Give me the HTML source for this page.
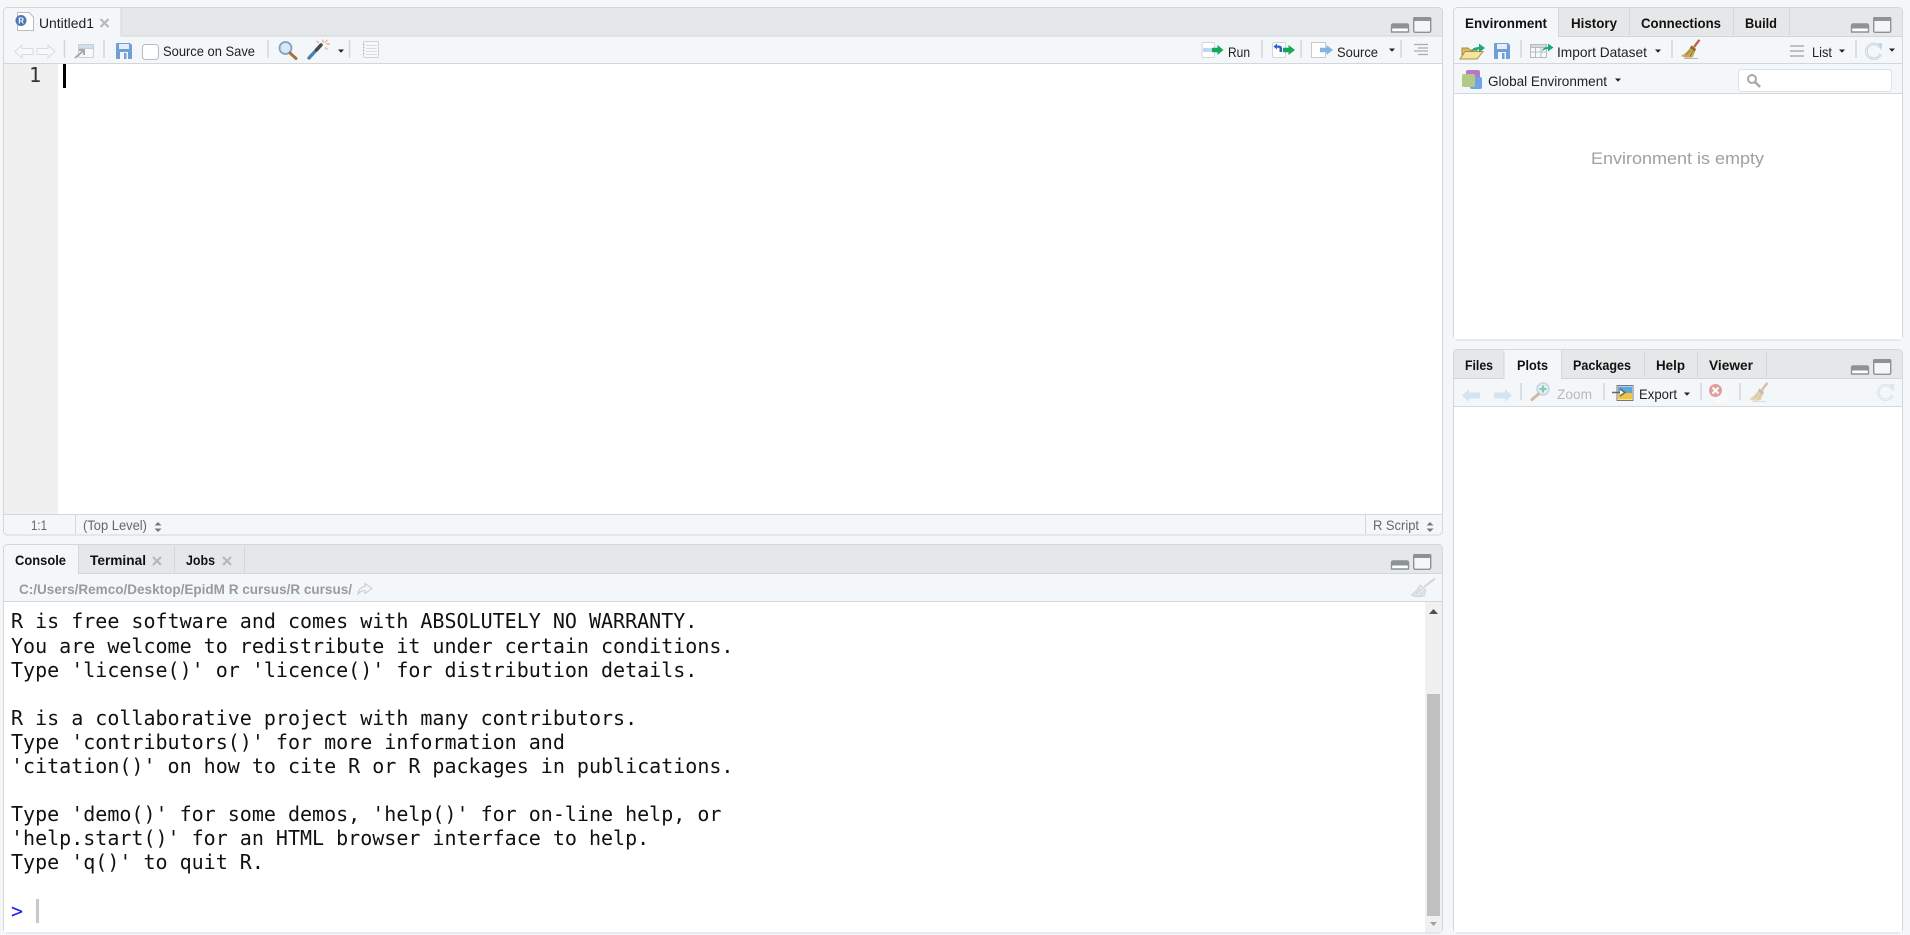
<!DOCTYPE html>
<html><head><meta charset="utf-8"><title>RStudio</title>
<style>
html,body{margin:0;padding:0;background:#f4f6f8;width:1910px;height:935px;overflow:hidden}
svg{display:block}
text{font-family:"Liberation Sans",sans-serif;font-size:14px;fill:#222;white-space:pre}
.b{font-weight:bold;fill:#111}
.m{font-family:"DejaVu Sans Mono",monospace;font-size:20px;fill:#111}
.st{fill:#666;font-size:14px}
.sep{stroke:#d3d7d9;stroke-width:1.5}
</style></head><body>
<svg width="1910" height="935" viewBox="0 0 1910 935" xmlns="http://www.w3.org/2000/svg">
<defs>
<g id="win">
 <path d="M0.5 9 q0-2 2-2 h13 q2 0 2 2 v6 h-17z" fill="#fff" stroke="#8b9396" stroke-width="1.4"/>
 <path d="M0 9 q0-2.500 2.500-2.500 h13 q2.500 0 2.500 2.500 v2.500 h-18z" fill="#8b9396"/>
 <rect x="22.700" y="0.700" width="17" height="14.600" rx="1.500" fill="#f4f6f8" stroke="#8b9396" stroke-width="1.400"/>
 <rect x="22" y="0" width="18.400" height="4" rx="1.500" fill="#8b9396"/>
</g>
<g id="floppy">
 <path d="M0 1 q0-1 1-1 h13 l2 2 v13 q0 1-1 1 h-14 q-1 0-1-1z" fill="#6f9fd4"/>
 <rect x="3" y="1" width="10" height="5" fill="#e6eef7"/>
 <rect x="4" y="9" width="8" height="7" fill="#f4f7fa"/>
 <rect x="8" y="10" width="2.500" height="6" fill="#6f9fd4"/>
</g>
<g id="broom">
 <path d="M13 8 L18.500 0.800" stroke="#c0654a" stroke-width="2.400" fill="none"/>
 <path d="M10.500 6.500 L15 10 L12 18 Q6 20 0 17 Q6 14 10.500 6.500z" fill="#caa659"/>
 <path d="M10.500 6.500 L15 10 L13.800 12.500 L9 9z" fill="#8b6b2e"/>
 <path d="M5 16 L9.500 11 M9 17.500 L12 12" stroke="#8f7434" stroke-width="0.800" fill="none"/>
 <path d="M3 19.500 h14" stroke="#b9b9b9" stroke-width="1"/>
</g>
<g id="arrowL"><path d="M0 6.500 L7 0 V3.500 H18 V9.500 H7 V13z"/></g>
<g id="arrowR"><path d="M18 6.500 L11 0 V3.500 H0 V9.500 H11 V13z"/></g>
<g id="refresh">
 <path d="M14.500 4 A7.300 7.300 0 1 0 15.500 11" fill="none" stroke="#c5d2e2" stroke-width="2.600"/>
 <path d="M11 1 L17 0 L16.500 7 z" fill="#c5d2e2"/>
 <path d="M14.500 4 A7.300 7.300 0 1 0 15.500 11" fill="none" stroke="#e9eff6" stroke-width="0.900"/>
</g>
<g id="ud"><path d="M-3.500 -1.500 L0 -5 L3.500 -1.500z M-3.500 1.500 L0 5 L3.500 1.500z" fill="#777"/></g>
<path id="caret" d="M-3 -1.500 H3 L0 1.800z" fill="#222"/>
<path id="xx" d="M-4 -4 L4 4 M4 -4 L-4 4" stroke="#b5b9bb" stroke-width="2.200" fill="none"/>
</defs>

<!-- ===== Editor pane ===== -->
<rect x="3.500" y="7.500" width="1439" height="527.500" rx="4" fill="#f4f7f9" stroke="#d3d7da"/>
<path d="M121 8 H1438 Q1442 8 1442 12 V36 H121z" fill="#e6e7e8"/>
<path d="M121 8 V36 H1442" fill="none" stroke="#d3d7da"/>
<path d="M4 12 Q4 8 8 8 H120 V36 H4z" fill="#f4f7f9"/>
<rect x="4" y="63.500" width="1438" height="451" fill="#fff"/>
<rect x="4" y="64" width="54" height="450" fill="#f0f0f0"/>
<path d="M4 63.500 H1442 M4 514.500 H1442" stroke="#d3d7da"/>
<!-- tab icon -->
<path d="M17.500 12.500 H29 L33.500 17 V30.500 H17.500z" fill="#fff" stroke="#b9bdc0"/>
<circle cx="21" cy="20.500" r="5.500" fill="#4a78b5"/>
<text x="18.300" y="23.500" style="font-size:8px;font-weight:bold;fill:#fff">R</text>
<text x="39" y="28" textLength="55" lengthAdjust="spacingAndGlyphs">Untitled1</text>
<use href="#xx" x="104.500" y="23"/>
<use href="#win" x="1391" y="17"/>
<!-- toolbar -->
<use href="#arrowL" x="15" y="45" fill="#f6f8f9" stroke="#d9dcde"/>
<use href="#arrowR" x="37" y="45" fill="#f6f8f9" stroke="#d9dcde"/>
<path class="sep" d="M64.500 40 V58 M104 40 V58 M268 40 V58 M349.500 40 V58 M1262 40 V58 M1301 40 V58 M1401 40 V58"/>
<g>
 <rect x="78.500" y="44.500" width="15" height="13" rx="1.500" fill="#f7f9fb" stroke="#c9ced2"/>
 <rect x="78.500" y="44.500" width="15" height="4" fill="#cfe0f1" stroke="#c9ced2"/>
 <path d="M75 58 L83 51 M79 50 H84 V55" stroke="#a3abb1" stroke-width="2" fill="none"/>
</g>
<use href="#floppy" x="116" y="43"/>
<rect x="142.500" y="44.500" width="16" height="15" rx="3" fill="#fff" stroke="#b7babc"/>
<text x="163" y="56" textLength="92" lengthAdjust="spacingAndGlyphs">Source on Save</text>
<g>
 <circle cx="285.500" cy="48" r="6" fill="#d8e8f7" stroke="#7fa3c5" stroke-width="1.800"/>
 <path d="M290 53 L296 58.500" stroke="#a8703e" stroke-width="3" stroke-linecap="round"/>
</g>
<g>
 <path d="M309 58 L321 45" stroke="#4a82ad" stroke-width="3.400" stroke-linecap="round"/>
 <path d="M316.500 50 L321 45" stroke="#4a4a4a" stroke-width="3.400" stroke-linecap="round"/>
 <path d="M323 39.500 V43 M330 44 H326 M327.500 40 L325 42.500 M327.500 49.500 L325 47.500 M316.500 41 L319 43" stroke="#f4b49a" stroke-width="1.500"/>
</g>
<use href="#caret" x="341" y="51"/>
<g>
 <rect x="363.500" y="41.500" width="15" height="16" rx="1.500" fill="#f8f9fa" stroke="#d0d3d6"/>
 <path d="M366 45.500 H377 M366 48.500 H377 M366 51.500 H377 M366 54.500 H377" stroke="#d5dde5"/>
 <path d="M364 44 V56" stroke="#aab0b5" stroke-dasharray="1 2"/>
</g>
<!-- run -->
<rect x="1202" y="42.500" width="12.500" height="15" rx="1.500" fill="#fff" stroke="#d2d6d9"/>
<rect x="1203" y="48" width="9" height="4" fill="#bcd7ee"/>
<path d="M1212 47.800 H1217.500 V45 L1223.500 50 L1217.500 55 V52.200 H1212z" fill="#14a85c"/>
<text x="1228" y="57" textLength="22" lengthAdjust="spacingAndGlyphs">Run</text>
<rect x="1272.500" y="42.500" width="13" height="15" rx="1.500" fill="#fff" stroke="#d2d6d9"/>
<path d="M1273.500 46.500 L1277 43.500 V45.500 H1279 Q1282 45.500 1282 48.500 V52 H1279.500 V49 Q1279.500 47.800 1278 47.800 H1277 V49.500z" fill="#2d63c8"/>
<path d="M1283 47.800 H1288.500 V45 L1295 50 L1288.500 55 V52.200 H1283z" fill="#14a85c"/>
<rect x="1311.500" y="42.500" width="14" height="15" fill="#fff" stroke="#c6cacd"/>
<path d="M1320 47.800 H1326.500 V45 L1333 50 L1326.500 55 V52.200 H1320z" fill="#84b5e2"/>
<text x="1337" y="57" textLength="41" lengthAdjust="spacingAndGlyphs">Source</text>
<use href="#caret" x="1392" y="50"/>
<path d="M1414 44.500 H1428 M1418 48 H1428 M1414 51 H1428 M1418 54.500 H1428" stroke="#a7abae" stroke-width="1.300"/>
<!-- editor content -->
<text class="m" x="29" y="82" style="fill:#333">1</text>
<rect x="63" y="64" width="3" height="24" fill="#000"/>
<!-- status -->
<text class="st" x="31" y="530" textLength="16" lengthAdjust="spacingAndGlyphs">1:1</text>
<path d="M75.500 515 V534 M1365.500 515 V534" stroke="#d3d7da"/>
<text class="st" x="83" y="530" textLength="64" lengthAdjust="spacingAndGlyphs">(Top Level)</text>
<use href="#ud" x="158" y="527"/>
<text class="st" x="1373" y="530" textLength="46" lengthAdjust="spacingAndGlyphs">R Script</text>
<use href="#ud" x="1430" y="527"/>

<!-- ===== Console pane ===== -->
<rect x="3.500" y="544.500" width="1439" height="388.500" rx="4" fill="#f4f7f9" stroke="#d3d7da"/>
<path d="M78 545 H1438 Q1442 545 1442 549 V573 H78z" fill="#e6e7e8"/>
<path d="M78.500 545 V573.500 H1442 M174.500 546 V572 M244.500 546 V572" fill="none" stroke="#d3d7da"/>
<rect x="4" y="601.500" width="1438" height="331" fill="#fff"/>
<path d="M4 601.500 H1442" stroke="#d3d7da"/>
<text class="b" x="15" y="565" textLength="51" lengthAdjust="spacingAndGlyphs" style="font-size:13.500px">Console</text>
<text class="b" x="90" y="565" textLength="56" lengthAdjust="spacingAndGlyphs" style="font-size:13.500px">Terminal</text>
<use href="#xx" x="157" y="561"/>
<text class="b" x="186" y="565" textLength="29" lengthAdjust="spacingAndGlyphs" style="font-size:13.500px">Jobs</text>
<use href="#xx" x="227" y="561"/>
<use href="#win" x="1391" y="554"/>
<text x="19" y="594" textLength="333" lengthAdjust="spacingAndGlyphs" style="font-weight:bold;fill:#9a9a9a;font-size:13.500px">C:/Users/Remco/Desktop/EpidM R cursus/R cursus/</text>
<path d="M358 594 Q359 587 365 586.500 V583.500 L372 588.500 L365 593.500 V590.500 Q361 590.500 358 594z" fill="#f4f7f9" stroke="#c6cacd"/>
<g fill="none" stroke="#cfd3d6">
 <path d="M1424 587 L1435 578.500" stroke-width="1.800"/>
 <path d="M1420 585 L1426 590 L1424 596 Q1417 597.500 1411.500 595 Q1417 591 1420 585z" fill="#e4e7e9"/>
 <path d="M1416 594 L1421 589 M1420 596 L1423.500 591"/>
</g>
<!-- scrollbar -->
<rect x="1425" y="602" width="17" height="330.500" fill="#f0f0f0"/>
<rect x="1427" y="694" width="13" height="222" fill="#c0c0c0"/>
<path d="M1429 614 L1433.500 609 L1438 614z" fill="#505050"/>
<path d="M1430 922 H1437 L1433.500 926z" fill="#a0a0a0"/>
<!-- console text -->
<g>
<text class="m" x="11" y="628">R is free software and comes with ABSOLUTELY NO WARRANTY.</text>
<text class="m" x="11" y="653">You are welcome to redistribute it under certain conditions.</text>
<text class="m" x="11" y="677">Type 'license()' or 'licence()' for distribution details.</text>
<text class="m" x="11" y="725">R is a collaborative project with many contributors.</text>
<text class="m" x="11" y="749">Type 'contributors()' for more information and</text>
<text class="m" x="11" y="773">'citation()' on how to cite R or R packages in publications.</text>
<text class="m" x="11" y="821">Type 'demo()' for some demos, 'help()' for on-line help, or</text>
<text class="m" x="11" y="845">'help.start()' for an HTML browser interface to help.</text>
<text class="m" x="11" y="869">Type 'q()' to quit R.</text>
<text class="m" x="11" y="918" style="fill:#1a1aff">&gt;</text>
</g>
<rect x="36" y="899" width="3" height="24" fill="#c8c8c8"/>

<!-- ===== Environment pane ===== -->
<rect x="1453.500" y="7.500" width="449" height="332.500" rx="4" fill="#f4f7f9" stroke="#d3d7da"/>
<path d="M1558 8 H1898 Q1902 8 1902 12 V36 H1558z" fill="#e6e7e8"/>
<path d="M1558.500 8 V36.500 H1902 M1629.500 9 V35 M1733.500 9 V35 M1789.500 9 V35" fill="none" stroke="#d3d7da"/>
<rect x="1454" y="93.500" width="448" height="246" fill="#fff"/>
<path d="M1454 63.500 H1902 M1454 93.500 H1902" stroke="#d3d7da"/>
<text class="b" x="1465" y="28" textLength="82" lengthAdjust="spacingAndGlyphs" style="font-size:13.500px">Environment</text>
<text class="b" x="1571" y="28" textLength="46" lengthAdjust="spacingAndGlyphs" style="font-size:13.500px">History</text>
<text class="b" x="1641" y="28" textLength="80" lengthAdjust="spacingAndGlyphs" style="font-size:13.500px">Connections</text>
<text class="b" x="1745" y="28" textLength="32" lengthAdjust="spacingAndGlyphs" style="font-size:13.500px">Build</text>
<use href="#win" x="1851" y="17"/>
<!-- env toolbar -->
<g>
 <path d="M1462 48 H1468 L1470 50 H1477 V58 H1462z" fill="#d8bd6c" stroke="#a98b3b"/>
 <path d="M1460 59 L1465 51.500 H1483 L1477 59z" fill="#f6e3a0" stroke="#ae8f3e"/>
 <path d="M1471 52 Q1472 47 1479 47 V43.500 L1485 48 L1479 52.500 V49.500 Q1474 49.500 1471 52z" fill="#1fa87a"/>
</g>
<use href="#floppy" x="1494" y="43"/>
<path class="sep" d="M1521 40 V58 M1672 40 V58 M1856 40 V58"/>
<g>
 <rect x="1530.500" y="44.500" width="16" height="13" fill="#f6f8fa" stroke="#b4bcc3"/>
 <rect x="1530.500" y="44.500" width="16" height="3" fill="#d5dade" stroke="#b4bcc3"/>
 <path d="M1535.500 47 V57 M1541 47 V57 M1531 52 H1546" stroke="#b4bcc3"/>
 <path d="M1542 51 Q1543 47 1548 47 V43.500 L1553.500 47.500 L1548 51.500 V49 Q1545 49 1542 51z" fill="#1fa87a"/>
</g>
<text x="1557" y="57" textLength="90" lengthAdjust="spacingAndGlyphs">Import Dataset</text>
<use href="#caret" x="1658" y="51"/>
<use href="#broom" x="1681" y="39"/>
<path d="M1790 46 H1804 M1790 51 H1804 M1790 56 H1804" stroke="#a9adb0" stroke-width="1.500"/>
<text x="1812" y="57" textLength="20" lengthAdjust="spacingAndGlyphs">List</text>
<use href="#caret" x="1842" y="51"/>
<use href="#refresh" x="1865" y="43"/>
<use href="#caret" x="1892" y="50"/>
<!-- global env -->
<rect x="1466" y="70" width="14" height="14" rx="2" fill="#b678c9"/>
<rect x="1470" y="77" width="12" height="12" rx="2" fill="#6fa3e3"/>
<rect x="1462" y="74" width="13" height="13" rx="2" fill="#b4c986"/>
<text x="1488" y="86" textLength="119" lengthAdjust="spacingAndGlyphs">Global Environment</text>
<use href="#caret" x="1618" y="80"/>
<rect x="1738.500" y="69.500" width="153" height="22" rx="3" fill="#fff" stroke="#e0e3e5"/>
<circle cx="1752" cy="79" r="4" fill="none" stroke="#a9a9a9" stroke-width="2"/>
<path d="M1755 82 L1760 87" stroke="#a9a9a9" stroke-width="2.600"/>
<text x="1591" y="164" textLength="173" lengthAdjust="spacingAndGlyphs" style="font-size:17px;fill:#a0a0a0">Environment is empty</text>

<!-- ===== Plots pane ===== -->
<rect x="1453.500" y="349.500" width="449" height="583.500" rx="4" fill="#f4f7f9" stroke="#d3d7da"/>
<path d="M1458 350 H1504 V378 H1454 V354 Q1454 350 1458 350z" fill="#e6e7e8"/>
<path d="M1561 350 H1898 Q1902 350 1902 354 V378 H1561z" fill="#e6e7e8"/>
<path d="M1454 378.500 H1504 V351 M1561.500 351 V378.500 H1902 M1644.500 351 V377 M1697.500 351 V377 M1766.500 351 V377" fill="none" stroke="#d3d7da"/>
<rect x="1454" y="406.500" width="448" height="526" fill="#fff"/>
<path d="M1454 406.500 H1902" stroke="#d3d7da"/>
<text class="b" x="1465" y="370" textLength="28" lengthAdjust="spacingAndGlyphs" style="font-size:13.500px">Files</text>
<text class="b" x="1517" y="370" textLength="31" lengthAdjust="spacingAndGlyphs" style="font-size:13.500px">Plots</text>
<text class="b" x="1573" y="370" textLength="58" lengthAdjust="spacingAndGlyphs" style="font-size:13.500px">Packages</text>
<text class="b" x="1656" y="370" textLength="29" lengthAdjust="spacingAndGlyphs" style="font-size:13.500px">Help</text>
<text class="b" x="1709" y="370" textLength="44" lengthAdjust="spacingAndGlyphs" style="font-size:13.500px">Viewer</text>
<use href="#win" x="1851" y="359"/>
<use href="#arrowL" x="1462" y="389" fill="#d3e3f0"/>
<use href="#arrowR" x="1494" y="389" fill="#d3e3f0"/>
<path class="sep" d="M1521 383 V400 M1604 383 V400 M1701 383 V400 M1740 383 V400"/>
<g opacity="0.55">
 <circle cx="1543" cy="389" r="6" fill="#cfe4f3" stroke="#9dbbd0" stroke-width="1.500"/>
 <path d="M1543 385.500 V392.500 M1539.500 389 H1546.500" stroke="#23a86e" stroke-width="2"/>
 <path d="M1538.500 394 L1532 399.500" stroke="#b9825a" stroke-width="3" stroke-linecap="round"/>
</g>
<text x="1557" y="399" textLength="35" lengthAdjust="spacingAndGlyphs" style="fill:#b8b8b8">Zoom</text>
<g>
 <rect x="1617" y="385.500" width="16" height="15" fill="#fff" stroke="#777"/>
 <rect x="1618" y="386.500" width="14" height="6.500" fill="#5ea6dc"/>
 <rect x="1618" y="393" width="14" height="6.500" fill="#f0c440"/>
 <path d="M1612 392.500 H1620 M1620 389 L1625 392.500 L1620 396" stroke="#666" stroke-width="1.400" fill="#fff"/>
</g>
<text x="1639" y="399" textLength="38" lengthAdjust="spacingAndGlyphs">Export</text>
<use href="#caret" x="1687" y="394"/>
<rect x="1715" y="390" width="13" height="13" fill="#f8f9fa"/>
<circle cx="1715.500" cy="390.500" r="6.500" fill="#e09f9f"/>
<path d="M1712.500 387.500 L1718.500 393.500 M1718.500 387.500 L1712.500 393.500" stroke="#fff" stroke-width="2"/>
<use href="#broom" x="1749" y="382" opacity="0.42"/>
<use href="#refresh" x="1877" y="384" opacity="0.55"/>
</svg>
</body></html>
